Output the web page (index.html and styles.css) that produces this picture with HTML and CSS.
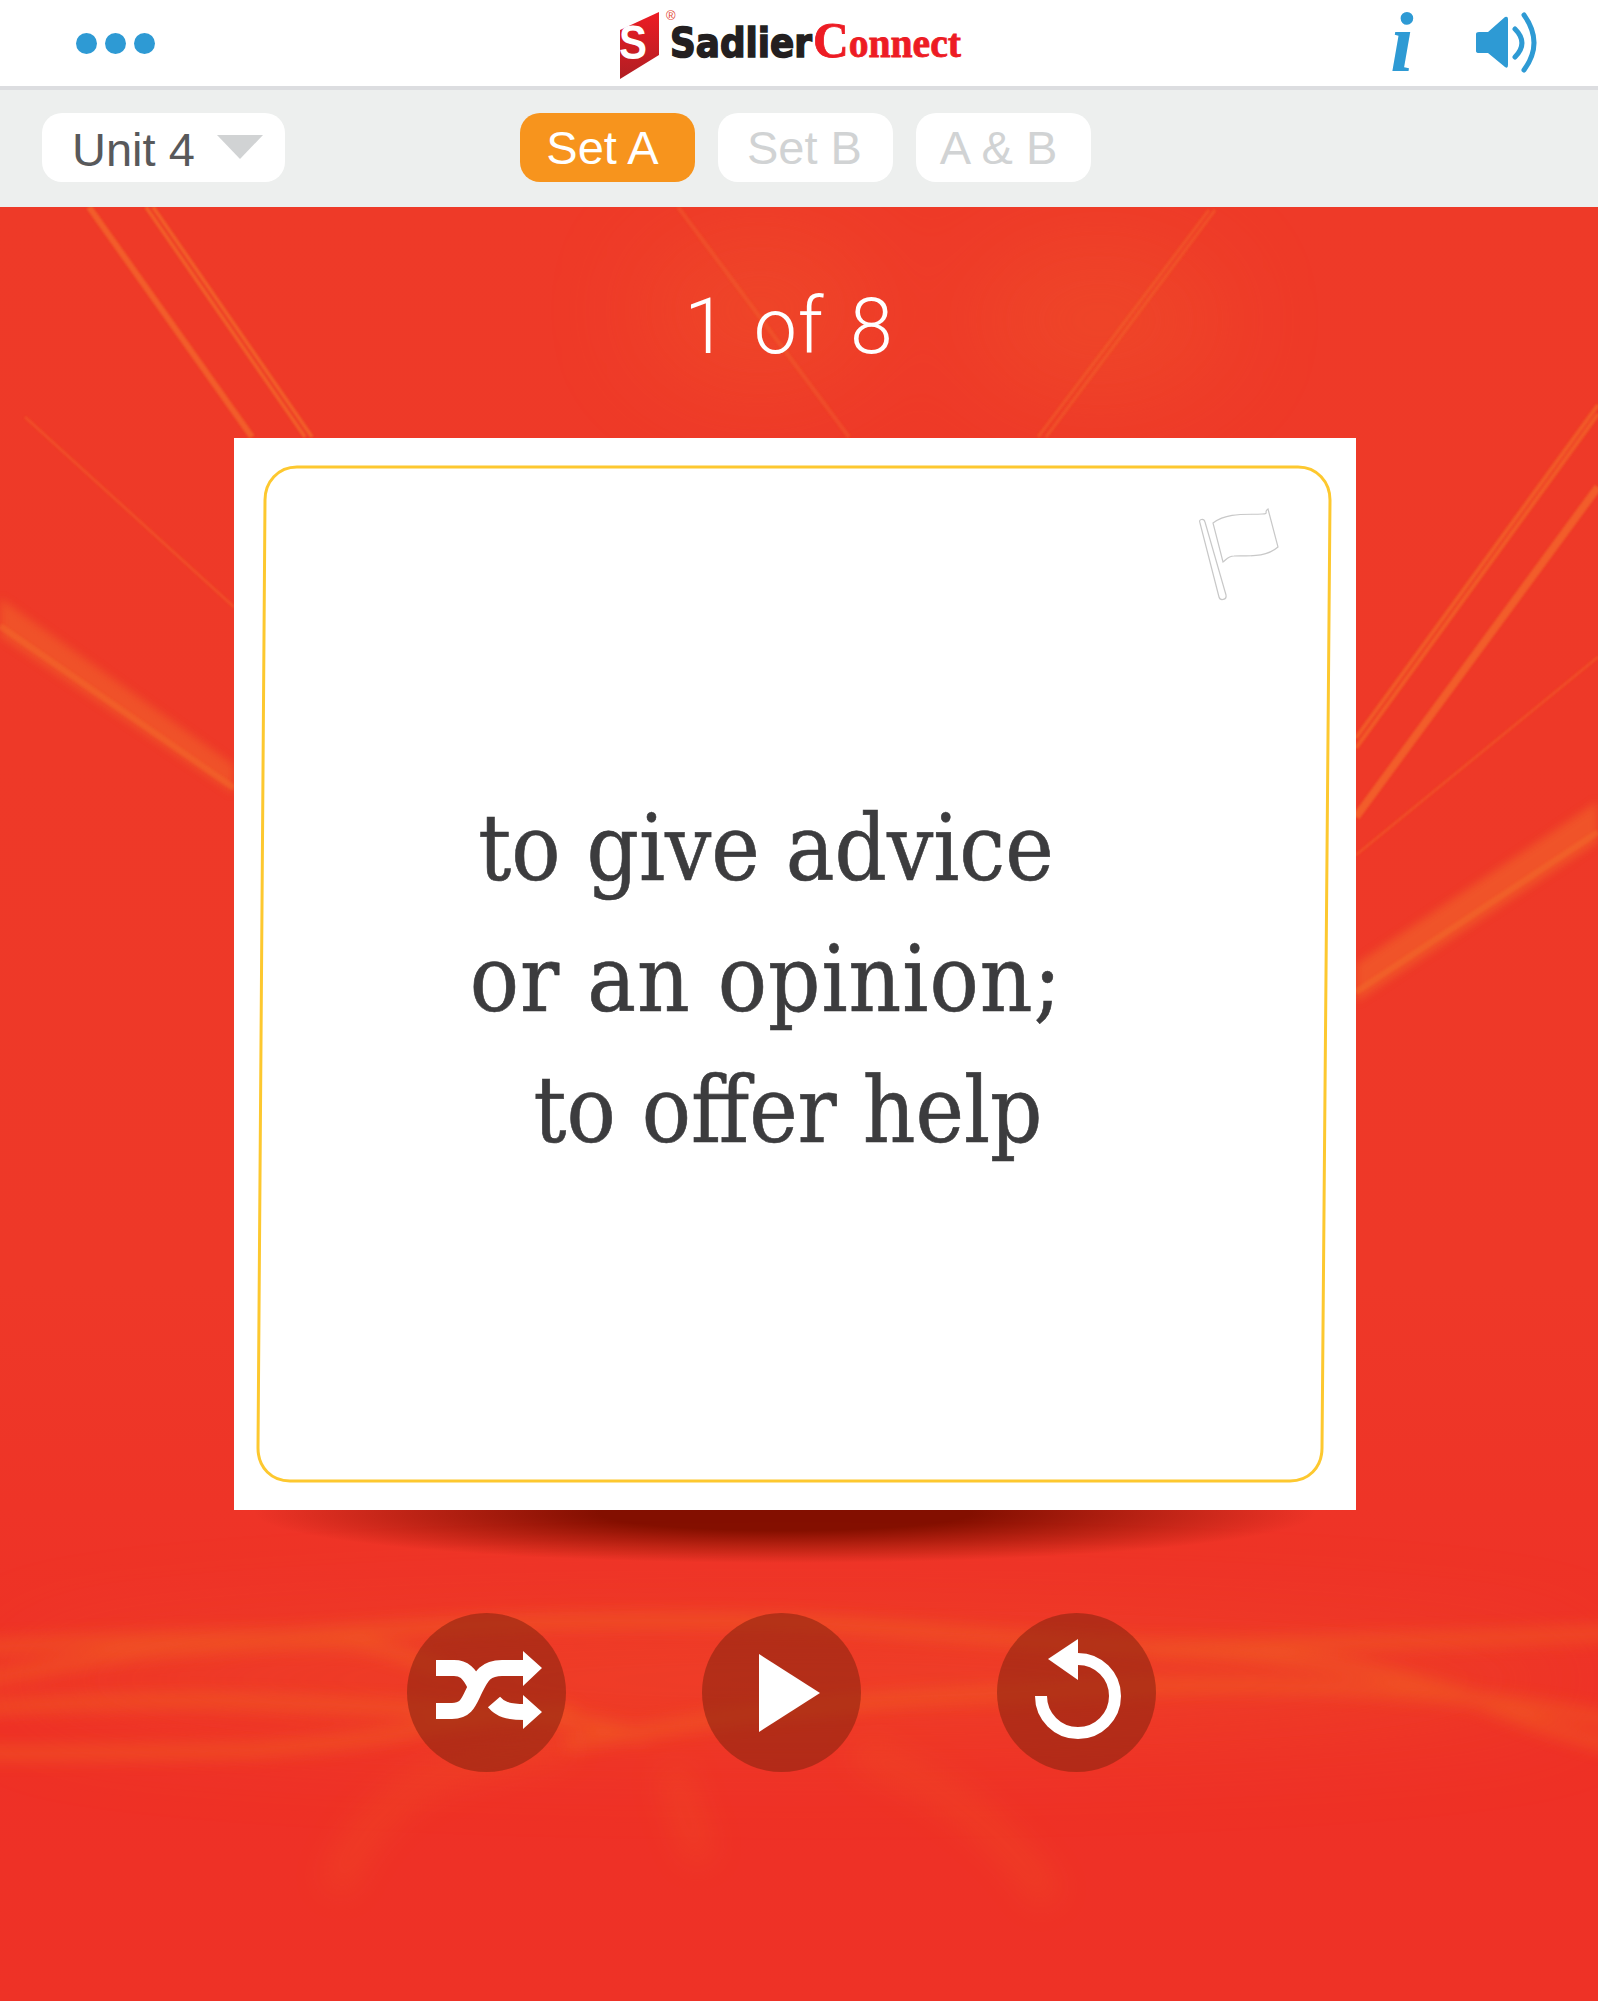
FILE: index.html
```html
<!doctype html>
<html>
<head>
<meta charset="utf-8">
<title>SadlierConnect Flashcards</title>
<link rel="stylesheet" href="styles.css">
</head>
<body>
<header class="topbar">
    <div class="dots"><span></span><span></span><span></span></div>
    <svg class="logo" width="350" height="86" viewBox="0 0 350 86">
        <defs>
            <linearGradient id="logored" x1="0" y1="0" x2="0" y2="1">
                <stop offset="0" stop-color="#ed1c24"/>
                <stop offset="1" stop-color="#b01e23"/>
            </linearGradient>
        </defs>
        <polygon points="5,30 44,12 44,55 5,79" fill="url(#logored)"/>
        <text x="4" y="59" class="logo-s" textLength="28" lengthAdjust="spacingAndGlyphs">S</text>
        <text x="51" y="20" class="logo-r">&#174;</text>
        <text x="55" y="57" class="logo-a" textLength="142" lengthAdjust="spacingAndGlyphs">Sadlier</text>
        <text x="198" y="57" class="logo-b" textLength="148" lengthAdjust="spacingAndGlyphs"><tspan class="logo-c">C</tspan>onnect</text>
    </svg>
    <span class="info">i</span>
    <svg class="speaker" width="62" height="66" viewBox="0 0 62 66">
        <path d="M1 25Q1 23 4 23H13L30 8Q33 7 33 10V56Q33 60 30 58L13 44H4Q1 44 1 42Z" fill="#2e9ad4"/>
        <path d="M40 20Q54 34 40 48M49 6Q69 34 49 61" fill="none" stroke="#2e9ad4" stroke-width="5" stroke-linecap="round"/>
    </svg>
</header>

<nav class="toolbar">
    <div class="pill unit">Unit 4<i class="caret"></i></div>
    <div class="sets">
        <div class="pill set on"><span>Set A</span></div>
        <div class="pill set near"><span>Set B</span></div>
        <div class="pill set"><span>A &amp; B</span></div>
    </div>
</nav>

<main class="stage">
    <svg class="streaks" width="1598" height="1794" viewBox="0 207 1598 1794">
        <defs>
            <filter id="b1" filterUnits="userSpaceOnUse" x="0" y="207" width="1598" height="1794"><feGaussianBlur stdDeviation="1"/></filter>
            <filter id="b4" filterUnits="userSpaceOnUse" x="0" y="207" width="1598" height="1794"><feGaussianBlur stdDeviation="4"/></filter>
            <filter id="b8" filterUnits="userSpaceOnUse" x="0" y="207" width="1598" height="1794"><feGaussianBlur stdDeviation="8"/></filter>
            <filter id="b16" filterUnits="userSpaceOnUse" x="0" y="207" width="1598" height="1794"><feGaussianBlur stdDeviation="16"/></filter>
            <filter id="b50" filterUnits="userSpaceOnUse" x="0" y="207" width="1598" height="1794"><feGaussianBlur stdDeviation="50"/></filter>
        </defs>
        <!-- soft glows -->
        <g fill="#f0612a" filter="url(#b50)" opacity=".3">
            <ellipse cx="760" cy="310" rx="120" ry="80"/>
            <ellipse cx="1100" cy="320" rx="130" ry="80"/>
            <ellipse cx="800" cy="1680" rx="800" ry="60"/>
        </g>
        <!-- top and side streaks -->
        <g stroke="#f4702a" fill="none" filter="url(#b1)">
            <path d="M89 207L252 437" stroke-width="6" opacity=".65"/>
            <path d="M146 207L305 437M153 207L312 437" stroke-width="3.5" opacity=".7"/>
            <path d="M25 417L234 607" stroke-width="2.5" opacity=".4"/>
            <path d="M678 207L849 437" stroke-width="4" opacity=".3"/>
            <path d="M1209 210L1038 437M1215 210L1046 437" stroke-width="3" opacity=".4"/>
            <path d="M1598 405L1356 738M1598 414L1356 748" stroke-width="4" opacity=".6"/>
            <path d="M1598 487L1356 817" stroke-width="8" opacity=".65"/>
            <path d="M1598 657L1356 855" stroke-width="2.5" opacity=".4"/>
        </g>
        <polygon points="0,598 234,765 234,794 0,636" fill="#f26a2a" opacity=".5" filter="url(#b4)"/>
        <path d="M0 626L234 788" stroke="#f26a2a" stroke-width="6" opacity=".5" filter="url(#b1)"/>
        <polygon points="1598,801 1356,964 1356,1002 1598,842" fill="#f26a2a" opacity=".55" filter="url(#b4)"/>
        <path d="M1598 832L1356 992" stroke="#f26a2a" stroke-width="6" opacity=".5" filter="url(#b1)"/>
        <!-- wisps under the card -->
        <g stroke="#f26a22" fill="none" stroke-width="14" filter="url(#b8)" opacity=".45" stroke-linecap="round">
            <path d="M-20 1648C100 1640 200 1638 285 1637C360 1632 440 1625 510 1623C620 1618 720 1620 815 1623C930 1630 1060 1645 1152 1647C1300 1645 1450 1640 1610 1633"/>
            <path d="M-20 1680C60 1665 130 1650 204 1647C270 1642 320 1640 357 1643C390 1650 420 1660 438 1667"/>
            <path d="M-20 1708C60 1703 130 1700 204 1700C300 1702 380 1708 459 1710C520 1712 590 1720 640 1735"/>
            <path d="M-20 1753C80 1754 170 1752 255 1750C320 1745 380 1738 428 1727C480 1718 530 1714 570 1713"/>
            <path d="M570 1743C660 1730 720 1716 764 1713C860 1700 940 1695 1019 1693C1130 1684 1230 1684 1325 1687C1430 1692 1520 1702 1610 1720"/>
            <path d="M1152 1650C1220 1652 1280 1658 1325 1663C1400 1675 1450 1690 1478 1700C1520 1720 1570 1735 1610 1745"/>
        </g>
        <g stroke="#f26a22" fill="none" stroke-width="30" filter="url(#b16)" opacity=".2">
            <path d="M336 1890C350 1840 390 1800 428 1780C480 1760 530 1750 570 1743"/>
            <path d="M672 1767C680 1800 690 1830 703 1860"/>
            <path d="M856 1750C930 1780 1000 1820 1050 1900"/>
        </g>
    </svg>

    <div class="counter">1 of 8</div>

    <section class="card">
        <svg class="card-art" width="1122" height="1072" viewBox="0 0 1122 1072">
            <path d="M63 29H1064C1083 29 1096 44 1096 62L1088 1010C1088 1030 1074 1043 1056 1043H56C38 1043 24 1030 24 1010L31 62C31 44 44 29 63 29Z" fill="none" stroke="#fdc82f" stroke-width="3"/>
            <g fill="#fff" stroke="#c8c8c8" stroke-width="1.2">
                <path d="M966 85C964 81 970 80 971 84L992 157C993 162 986 163 985 159Z"/>
                <path d="M979 85C994 74 1014 77 1028 76C1036 76 1029 74 1034 71L1044 109C1030 121 1012 117 1000 118C994 118 992 122 989 124Z"/>
            </g>
        </svg>
        <p class="term">
            <span>to give advice</span>
            <span class="wide">or an opinion;</span>
            <span class="shift">to offer help</span>
        </p>
    </section>

    <div class="controls">
        <button class="round">
            <svg width="159" height="159" viewBox="0 0 159 159">
                <g fill="none" stroke="#fff" stroke-width="16">
                    <path d="M29 98H45C60 98 62 88 68 76C74 64 78 55 95 55H118"/>
                    <path d="M29 55H47C57 55 62 60 68 72"/>
                    <path d="M87 89C93 96 100 99 118 99"/>
                </g>
                <path d="M116 38L135 55L116 73ZM116 82L135 99L116 116Z" fill="#fff"/>
            </svg>
        </button>
        <button class="round">
            <svg width="159" height="159" viewBox="0 0 159 159">
                <path d="M57 41L118 80L57 119Z" fill="#fff"/>
            </svg>
        </button>
        <button class="round">
            <svg width="159" height="159" viewBox="0 0 159 159">
                <path d="M81 46A37 37 0 1 1 44 83" fill="none" stroke="#fff" stroke-width="12"/>
                <path d="M81 26L51 46L81 67Z" fill="#fff"/>
            </svg>
        </button>
    </div>
</main>
</body>
</html>
```

FILE: styles.css
```css
html, body {
    margin: 0;
    padding: 0;
}
body {
    width: 1598px;
    height: 2001px;
    overflow: hidden;
    background: #ee3426;
    font-family: "Liberation Sans", Arial, sans-serif;
}

/* top bar */
.topbar {
    box-sizing: border-box;
    height: 90px;
    display: flex;
    align-items: flex-start;
    background: #fff;
    border-bottom: 4px solid #dcdde0;
}
.dots {
    display: flex;
    gap: 8px;
    margin: 33px 0 0 76px;
}
.dots span {
    width: 21px;
    height: 21px;
    border-radius: 50%;
    background: #2e9ad4;
}
.logo {
    margin-left: 460px;
}
.logo-s {
    font: bold 48px "Liberation Sans", sans-serif;
    fill: #fff;
}
.logo-r {
    font: 13px "Liberation Sans", sans-serif;
    fill: #e2442f;
}
.logo-a {
    font: bold 41px "DejaVu Sans", sans-serif;
    fill: #231f20;
    stroke: #231f20;
    stroke-width: 1.6;
}
.logo-b {
    font: bold 40px "Liberation Serif", serif;
    fill: #ed1c24;
    stroke: #ed1c24;
    stroke-width: 0.8;
}
.logo-c {
    font-size: 50px;
}
.info {
    width: 40px;
    margin-left: 417px;
    text-align: center;
    font: italic bold 84px/86px "Liberation Serif", serif;
    color: #2e9ad4;
}
.speaker {
    margin: 9px 0 0 53px;
}

/* toolbar */
.toolbar {
    box-sizing: border-box;
    height: 117px;
    display: flex;
    padding: 23px 0 0 42px;
    background: #edefee;
}
.pill {
    box-sizing: border-box;
    height: 69px;
    border-radius: 20px;
    background: #fff;
    font-size: 47px;
    line-height: 69px;
    color: #d1d3d4;
}
.unit {
    width: 243px;
    display: flex;
    align-items: center;
    padding: 4px 0 0 30px;
    color: #58595b;
}
.caret {
    width: 0;
    height: 0;
    margin: -5px 0 0 22px;
    border-left: 23px solid transparent;
    border-right: 23px solid transparent;
    border-top: 24px solid #d1d3d4;
}
.sets {
    display: flex;
    gap: 23px;
    margin-left: 235px;
}
.set {
    width: 175px;
    padding-right: 10px;
    text-align: center;
}
.set.near {
    padding-right: 2px;
}
.set.on {
    background: #f7941d;
    color: #fff;
}

/* red area */
.stage {
    position: relative;
    isolation: isolate;
    height: 1794px;
    background: linear-gradient(to bottom, #ee3a28 0%, #ee3828 60%, #ee3026 85%, #ee3226 100%);
}
.streaks {
    position: absolute;
    top: 0;
    left: 0;
}
.counter {
    position: relative;
    box-sizing: border-box;
    height: 231px;
    padding: 53px 20px 0 0;
    text-align: center;
    font: 300 77px/135px Roboto, sans-serif;
    word-spacing: 6px;
    letter-spacing: 1px;
    color: #fff;
}
.card {
    position: relative;
    box-sizing: border-box;
    width: 1122px;
    height: 1072px;
    margin-left: 234px;
    display: flex;
    align-items: center;
    justify-content: center;
    padding: 10px 58px 0 0;
    background: #fff;
}
.card::before {
    content: "";
    position: absolute;
    left: 20px;
    right: 40px;
    top: 1025px;
    height: 100px;
    background: radial-gradient(ellipse closest-side, #830f00 35%, rgba(131, 15, 0, 0) 100%);
    z-index: -1;
}
.card-art {
    position: absolute;
    top: 0;
    left: 0;
}
.term {
    position: relative;
    margin: 0;
    text-align: center;
    font: 91px/131px "DejaVu Serif Condensed", "DejaVu Serif", serif;
    font-stretch: condensed;
    color: #3c3c3e;
    -webkit-text-stroke: 0.6px #3c3c3e;
}
.term span {
    display: block;
}
.term .wide {
    letter-spacing: 1px;
}
.term .shift {
    margin-left: 44px;
}
.controls {
    position: relative;
    display: flex;
    gap: 136px;
    margin: 103px 0 0 407px;
}
.round {
    width: 159px;
    height: 159px;
    padding: 0;
    border: 0;
    border-radius: 50%;
    background: rgba(140, 37, 15, 0.6);
}
.round svg {
    display: block;
}
```
